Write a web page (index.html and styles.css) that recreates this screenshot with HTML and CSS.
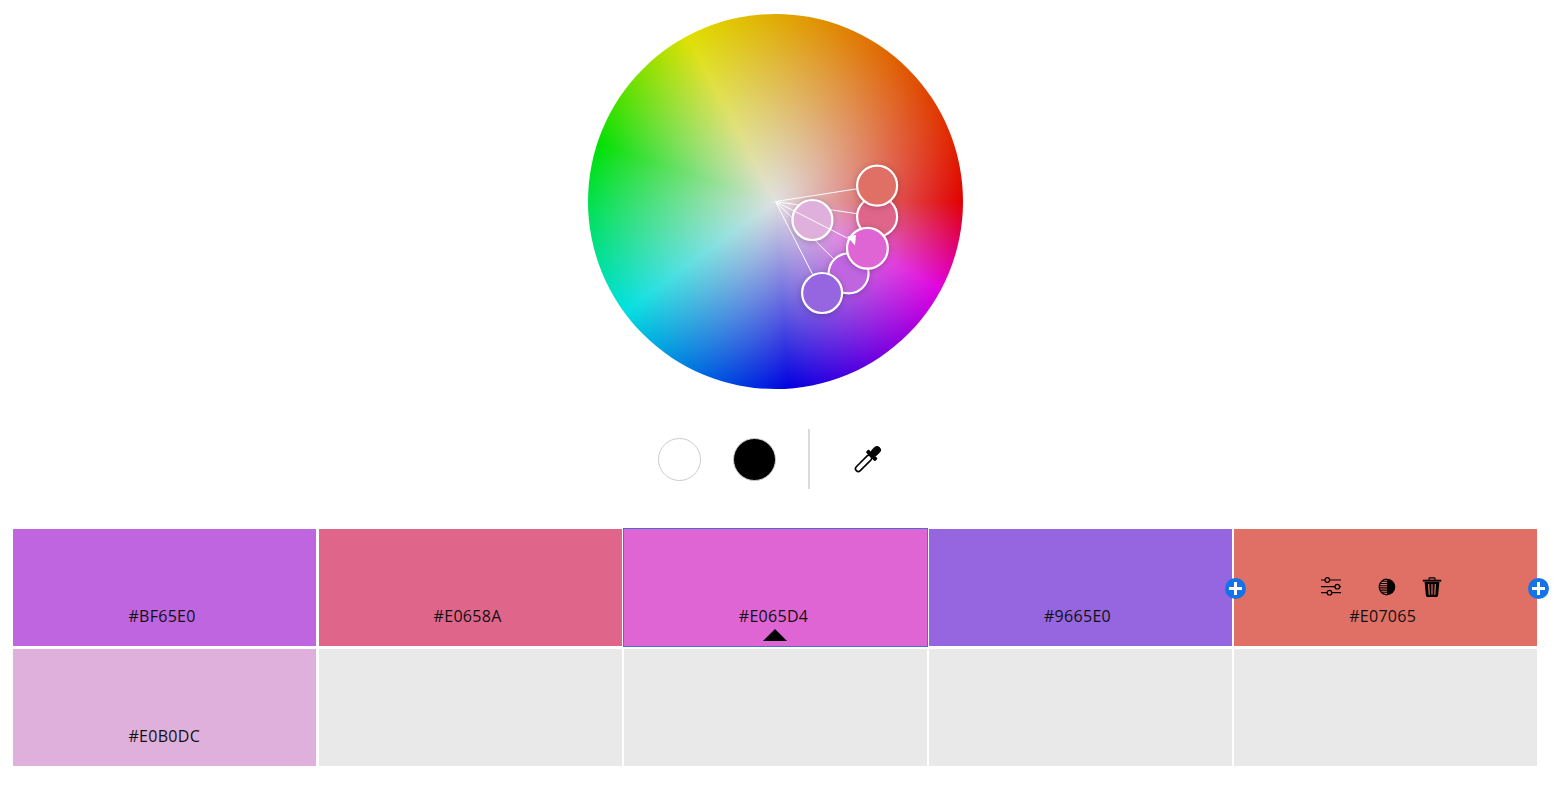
FILE: index.html
```html
<!DOCTYPE html>
<html lang="en">
<head>
<meta charset="utf-8">
<title>Color wheel</title>
<link rel="stylesheet" href="styles.css">
</head>
<body>
<main class="page">
  <section class="wheel">
    <svg class="wheel-marks" viewBox="0 0 375 375" width="375" height="375">
      <g class="spoke">
        <line x1="187.5" y1="187.5" x2="289.1" y2="171.7"/>
        <line x1="187.5" y1="187.5" x2="289.1" y2="202.7"/>
        <line x1="187.5" y1="187.5" x2="260.4" y2="259.3"/>
        <line x1="187.5" y1="187.5" x2="234.1" y2="279"/>
      </g>
      <circle class="handle" cx="289.1" cy="202.7" r="20" fill="#E0658A"/>
      <circle class="handle" cx="260.6" cy="259.3" r="20" fill="#BF65E0"/>
      <circle class="handle" cx="289.1" cy="171.7" r="20" fill="#E07065"/>
      <circle class="handle" cx="234.1" cy="279" r="20" fill="#9665E0"/>
      <circle class="handle" cx="224.4" cy="206" r="20" fill="#E0B0DC"/>
      <line class="spoke" x1="187.5" y1="187.5" x2="279.4" y2="234.3"/>
      <circle class="handle" cx="279.4" cy="234.3" r="20.4" fill="#E065D4"/>
      <polygon class="pointer" points="259.2,222.6 268,221 267,231.5"/>
    </svg>
  </section>

  <section class="controls">
    <button class="dot dot-white" type="button" aria-label="White"></button>
    <button class="dot dot-black" type="button" aria-label="Black"></button>
    <span class="divider"></span>
    <svg class="dropper" viewBox="0 0 36 36" width="36" height="36">
      <g transform="rotate(45 18 18)">
        <rect x="15.2" y="14" width="5.6" height="20.5" rx="2.8" class="dropper-tube"/>
        <rect x="11.5" y="10.8" width="13" height="4" rx="1"/>
        <rect x="14.2" y="1.5" width="7.6" height="10.5" rx="3.5"/>
      </g>
    </svg>
  </section>

  <section class="swatches">
    <div class="tile c1">#BF65E0</div>
    <div class="tile c2">#E0658A</div>
    <div class="tile c3 selected">#E065D4<span class="caret"></span></div>
    <div class="tile c4">#9665E0</div>
    <div class="tile c5">#E07065
      <div class="tools">
        <svg class="tool" viewBox="0 0 20 20" width="20" height="20">
          <g class="tool-line">
            <path d="M0 3H4M9 3H20M0 9.700H14M19 9.700H20M0 15.700H6M11 15.700H20"/>
            <circle cx="6.300" cy="3" r="2.300"/>
            <circle cx="16.300" cy="9.700" r="2.300"/>
            <circle cx="8.500" cy="15.700" r="2.300"/>
          </g>
        </svg>
        <svg class="tool tool-contrast" viewBox="0 0 20 20" width="20" height="20">
          <path d="M10 1.700a8.300 8.300 0 0 1 0 16.600z"/>
          <path class="tool-line" d="M10 2.200a7.800 7.800 0 0 0 0 15.600"/>
          <path class="tool-thin" d="M5 4.300H10M3.400 6.500H10M2.500 8.700H10M2.500 10.900H10M3.200 13.100H10M4.600 15.300H10"/>
        </svg>
        <svg class="tool tool-trash" viewBox="0 0 20 20" width="20" height="20">
          <path d="M6.500 2.800V1.300a1 1 0 0 1 1-1h5a1 1 0 0 1 1 1v1.500h-1.200V1.500H7.700v1.300z"/>
          <path d="M0.800 2.700h18.400v1.900H.8z"/>
          <path fill-rule="evenodd" d="M2.600 5.100h14.800l-1.300 13.500a1.400 1.400 0 0 1-1.400 1.300H5.300a1.400 1.400 0 0 1-1.400-1.300zM6 7l.6 10.800h1.200L7.300 7zM9.400 7v10.800h1.200V7zM12.700 7l-.5 10.800h1.200L14 7z"/>
        </svg>
      </div>
      <span class="add add-left"></span>
      <span class="add add-right"></span>
    </div>
    <div class="tile c6">#E0B0DC</div>
    <div class="tile empty"></div>
    <div class="tile empty"></div>
    <div class="tile empty"></div>
    <div class="tile empty"></div>
  </section>
</main>
</body>
</html>
```
FILE: styles.css
```css
* { box-sizing: border-box; }

html, body {
  margin: 0;
  background: #fff;
}

body {
  width: 1566px;
  height: 788px;
  overflow: hidden;
  font-family: "Open Sans", "Noto Sans", "Liberation Sans", sans-serif;
  font-size: 16px;
  color: #111;
}

.page {
  width: 1523.8px;
  margin-left: 13.4px;
  padding-top: 14px;
}

.wheel {
  position: relative;
  width: 375px;
  height: 375px;
  margin: 0 auto;
  border-radius: 50%;
  background:
    radial-gradient(closest-side, rgba(224, 224, 224, 1) 0, rgba(224, 224, 224, 0) 100%),
    conic-gradient(from 332deg, #e0e000 0deg, #e00000 118deg, #e000e0 146deg, #0000e0 204deg, #00e0e0 262deg, #00e000 316deg, #e0e000 360deg);
}

.wheel-marks {
  position: absolute;
  left: 0;
  top: 0;
}

.spoke line,
line.spoke {
  stroke: #fff;
  stroke-width: 1;
}

.handle {
  stroke: #fff;
  stroke-width: 2.2;
  filter: drop-shadow(0 1px 3px rgba(0, 0, 0, 0.22));
}

.pointer { fill: #fff; }

.controls {
  display: flex;
  align-items: center;
  justify-content: center;
  height: 60px;
  margin-top: 40px;
  padding-right: 6px;
}

.dot {
  width: 43px;
  height: 43px;
  padding: 0;
  border-radius: 50%;
  border: 1px solid #ccc;
}

.dot-white { background: #fff; }

.dot-black {
  margin-left: 32px;
  background: #000;
}

.divider {
  width: 2px;
  height: 60px;
  margin-left: 32px;
  background: #dcdcdc;
}

.dropper {
  margin-left: 40px;
}

.dropper-tube {
  fill: none;
  stroke: #000;
  stroke-width: 1.600;
}

.swatches {
  display: grid;
  grid-template-columns: repeat(5, 303px);
  grid-auto-rows: 117px;
  column-gap: 2.2px;
  row-gap: 3px;
  margin-top: 40px;
}

.tile {
  position: relative;
  padding: 76px 0 0 115px;
  line-height: 22px;
  letter-spacing: 0.3px;
}

.c1 { background: #bf65e0; }
.c2 { background: #e0658a; }
.c3 { background: #e065d4; }
.c4 { background: #9665e0; }
.c5 { background: #e07065; }
.c6 { background: #e0b0dc; }
.empty { background: #e9e9e9; }

.selected {
  box-shadow: 0 0 0 1px #4b6fd1;
  z-index: 1;
}

.caret {
  position: absolute;
  left: 139.5px;
  top: 100px;
  border-left: 12px solid transparent;
  border-right: 12px solid transparent;
  border-bottom: 12px solid #000;
}

.tools {
  position: absolute;
  left: 86.800px;
  top: 48px;
  display: flex;
}

.tool { display: block; }
.tool-contrast { margin-left: 36px; }
.tool-trash { margin-left: 25px; }

.tool-line {
  fill: none;
  stroke: #000;
  stroke-width: 1.200;
}

.tool-thin {
  fill: none;
  stroke: #000;
  stroke-width: 1.100;
}

.add {
  position: absolute;
  top: 48.500px;
  width: 21px;
  height: 21px;
  border-radius: 50%;
  z-index: 2;
  background:
    linear-gradient(#fff, #fff) center / 13px 3px no-repeat,
    linear-gradient(#fff, #fff) center / 3px 13px no-repeat,
    #1473e6;
}

.add-left { left: -8.700px; }
.add-right { right: -12.300px; }
```
